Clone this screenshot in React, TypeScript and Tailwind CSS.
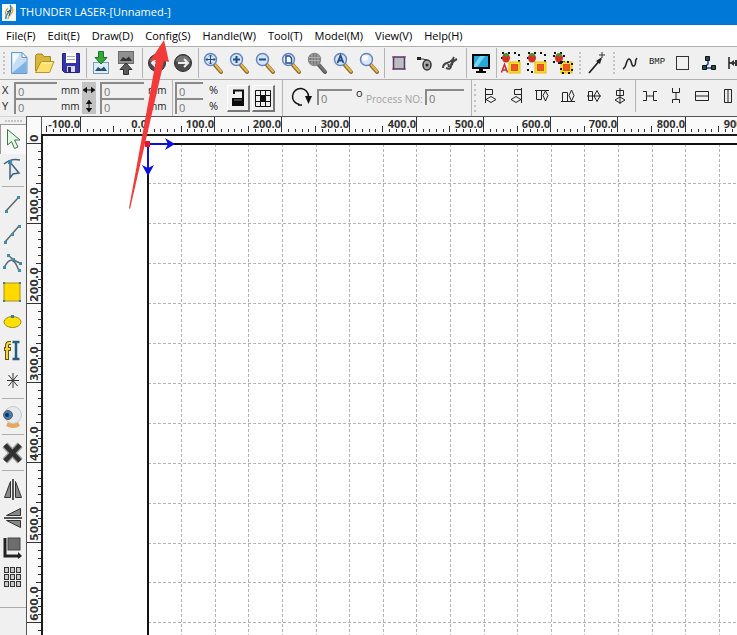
import type { ReactNode } from 'react'

const MENUS = ['File(F)', 'Edit(E)', 'Draw(D)', 'Config(S)', 'Handle(W)', 'Tool(T)', 'Model(M)', 'View(V)', 'Help(H)']

// canvas scale: pixels per 100 units on each axis
const STEP_X = 67.2
const STEP_Y = 79.8
const ORIGIN_X = 105
const ORIGIN_Y = 8

// how many hundreds fit in the window
const COLS = Math.ceil((window.innerWidth - 148) / STEP_X)
const ROWS = Math.floor((window.innerHeight - 144) / STEP_Y)

const range = (from: number, to: number) => Array.from({ length: to - from + 1 }, (_, i) => from + i)

export default function App() {
  return (
    <div className="relative h-screen flex flex-col overflow-hidden bg-[#f0f0f0] text-[#222] font-['Open_Sans','Noto_Sans',sans-serif]">
      <TitleBar />
      <MenuBar />
      <MainToolbar />
      <PropertyBar />
      <div className="flex flex-1 min-h-0">
        <SideTools />
        <Workspace />
      </div>
      <Pointer />
    </div>
  )
}

function TitleBar() {
  return (
    <header className="flex items-center h-[25px] shrink-0 gap-1 pl-0.5 bg-[#0078d7]">
      <svg width="14" height="17" viewBox="0 0 14 17">
        <rect width="14" height="17" fill="#f4f8fa" />
        <path d="M8 1C10 4 9 6 7 8S3 12 4 15" fill="none" stroke="#2f86b8" strokeWidth="1.5" />
        <path d="M10 3C12 7 10 9 8 11S6 14 6 15M6 4C3 7 3 9 4 11" fill="none" stroke="#d2a637" strokeWidth="1.2" />
        <path d="M5 8L9 6L7 12" fill="none" stroke="#26485e" />
      </svg>
      <h1 className="text-[11px] text-white whitespace-nowrap">THUNDER LASER-[Unnamed-]</h1>
    </header>
  )
}

function MenuBar() {
  return (
    <nav className="flex items-center h-[21px] pt-0.5 shrink-0 bg-white">
      {MENUS.map(m => (
        <button key={m} className="px-1.5 text-[11px] whitespace-nowrap text-black">{m}</button>
      ))}
    </nav>
  )
}

function ToolButton({ label, children }: { label: string; children: ReactNode }) {
  return (
    <button aria-label={label} title={label} className="w-[26px] h-full shrink-0 flex items-center justify-center">
      <svg width="24" height="24" viewBox="0 0 24 24" fill="none">{children}</svg>
    </button>
  )
}

function Sep() {
  return <div className="w-px mx-0.5 mr-px self-stretch shrink-0 bg-[#b4b4b4]" />
}

function Grip() {
  return (
    <div className="w-2 py-1 self-stretch shrink-0 flex flex-col items-center justify-between">
      {range(0, 5).map(i => <span key={i} className="size-0.5 bg-[#c4c4c4]" />)}
    </div>
  )
}

function Lens({ grey, children }: { grey?: boolean; children?: ReactNode }) {
  return (
    <>
      <path d="M13.5 13.5L20 21" stroke={grey ? '#555' : '#8b6a35'} strokeWidth="4" strokeLinecap="round" />
      <path d="M14.5 14L20 20.5" stroke={grey ? '#777' : '#eab84a'} strokeWidth="2" strokeLinecap="round" />
      <circle cx="9.5" cy="8.5" r="6" fill={grey ? '#777' : '#d6e6fa'} stroke={grey ? '#888' : '#6585bd'} strokeWidth="1.5" />
      {children}
    </>
  )
}

function Handles({ x, y, w, h }: { x: number; y: number; w: number; h: number }) {
  return <rect x={x} y={y} width={w} height={h} stroke="#111" strokeWidth="2" strokeDasharray="2 4" />
}

function Group({ variant }: { variant: 'text' | 'plain' | 'offset' }) {
  const dx = variant === 'offset' ? 1 : 0
  return (
    <>
      {variant === 'offset'
        ? <Handles x={3} y={2} w={10} h={10} />
        : <Handles x={3} y={2} w={17} h={19} />}
      <ellipse cx={7 + dx} cy="7" rx="4" ry="4.5" fill="#d4301f" />
      <path d={`M${4 + dx} 4Q${7 + dx} 0 ${10 + dx} 4L${8 + dx} 6Z`} fill="#3c9a35" />
      <rect x="10" y="11" width="11" height="11" fill="#ffe11d" stroke="#e3bb13" />
      <rect x="12.5" y="13.5" width="6" height="6" fill="#f4532c" stroke="#d9541c" />
      {variant === 'offset' && <Handles x={10} y={11} w={11} h={11} />}
      {variant === 'text' && (
        <>
          <rect x="1" y="12" width="8" height="11" fill="#f0f0f0" />
          <path d="M2.5 21.5L5.5 13.5L8.5 21.5M4 19H7" stroke="#cf2930" strokeWidth="1.5" />
        </>
      )}
    </>
  )
}

function RoundArrow({ flip }: { flip?: boolean }) {
  return (
    <>
      <circle cx="12" cy="12" r="8.5" fill="#4c4c4c" stroke="#2f2f2f" />
      <path d="M4.5 10A8 8 0 0 1 19.5 10Q12 13 4.5 10Z" fill="#777" />
      <path d={flip ? 'M17 12H7M11 8L7 12L11 16' : 'M7 12H17M13 8L17 12L13 16'} stroke="#eee" strokeWidth="2" />
    </>
  )
}

function MainToolbar() {
  return (
    <div role="toolbar" aria-label="Main" className="flex items-center h-[34px] py-px shrink-0 overflow-hidden border-y border-[#b0b0b0]">
      <div className="-mr-0.5 self-stretch flex"><Grip /></div>
      <ToolButton label="New">
        <path d="M4.5 1.5H15L20 6.5V22.5H4.5Z" fill="#c5def6" stroke="#6d9bc9" />
        <path d="M5 22L19.5 10V22Z" fill="#7eb2e4" />
        <path d="M5.5 2.5H13L6 14Z" fill="#f2f9ff" />
        <path d="M15 1.5V6.5H20Z" fill="#fff" stroke="#6d9bc9" />
      </ToolButton>
      <ToolButton label="Open">
        <path d="M2.5 20V4.5L4 3H9L11 5.5H17.5V10" fill="#d9b73a" stroke="#a98722" />
        <path d="M2.5 21.5L8 10.5H21L16.5 21.5Z" fill="#fbe06c" stroke="#b8932a" />
        <path d="M9 12H19" stroke="#fff4b6" />
      </ToolButton>
      <ToolButton label="Save">
        <path d="M3.5 2.5H20.5V21.5H5.5L3.5 19.5Z" fill="#3433a8" stroke="#242383" />
        <rect x="7" y="2" width="10" height="10" fill="#fff" />
        <path d="M8 5.5H16M8 8.5H16" stroke="#aaa" />
        <rect x="8" y="15" width="8" height="6" fill="#d8d8e8" />
        <rect x="9" y="16" width="3" height="5" fill="#28276f" />
      </ToolButton>
      <Sep />
      <ToolButton label="Import">
        <rect x="4.5" y="11.5" width="15" height="11" fill="#dceefb" stroke="#7a9db5" />
        <path d="M6 20L9 16L12 18L15 15.5L18 20Z" fill="#28506b" />
        <path d="M9.5 0.5H14.5V6.5H18L12 13L6 6.5H9.5Z" fill="#35a83a" stroke="#1d7426" />
      </ToolButton>
      <ToolButton label="Export">
        <rect x="3.5" y="0.5" width="15" height="12" fill="#909090" stroke="#6c6c6c" />
        <path d="M5 10L8 6L11 8L14 5.5L17 10Z" fill="#333" />
        <path d="M8.5 23.5H13.5V18.5H17L11 12L5 18.5H8.5Z" fill="#5b5b5b" stroke="#333" />
      </ToolButton>
      <Sep />
      <ToolButton label="Undo"><RoundArrow flip /></ToolButton>
      <ToolButton label="Redo"><RoundArrow /></ToolButton>
      <Sep />
      <ToolButton label="Pan">
        <Lens>
          <path d="M5 8.5H14M9.5 4V13M8 5.5L9.5 4L11 5.5M8 11.5L9.5 13L11 11.5M6.5 7L5 8.5L6.5 10M12.5 7L14 8.5L12.5 10" stroke="#234c8e" />
        </Lens>
      </ToolButton>
      <ToolButton label="Zoom in"><Lens><path d="M6 8.5H13M9.5 5V12" stroke="#234c8e" strokeWidth="2" /></Lens></ToolButton>
      <ToolButton label="Zoom out"><Lens><path d="M6 8.5H13" stroke="#234c8e" strokeWidth="2" /></Lens></ToolButton>
      <ToolButton label="Zoom page"><Lens><path d="M7 5H10.5L12.5 7V12H7Z" fill="#fff" stroke="#234c8e" strokeWidth="1.4" /></Lens></ToolButton>
      <ToolButton label="Zoom data">
        <Lens grey><path d="M4 6.5H15M4 9.5H15M7 3.5V14M10 3V14M13 4V13" stroke="#bbb" strokeWidth="0.8" /></Lens>
      </ToolButton>
      <ToolButton label="Zoom all"><Lens><path d="M6.5 12L9.5 4.5L12.5 12M7.5 9.5H11.5" stroke="#234c8e" strokeWidth="1.8" /></Lens></ToolButton>
      <ToolButton label="Zoom select"><Lens><circle cx="8" cy="7" r="3" fill="#fff" /></Lens></ToolButton>
      <Sep />
      <ToolButton label="Frame">
        <rect x="6.5" y="6" width="11" height="12" fill="#bdbdbd" stroke="#4b3a78" strokeWidth="1.5" />
        <path d="M5 6H8M16 6H19M5 18H8M16 18H19" stroke="#b3343c" />
      </ToolButton>
      <ToolButton label="Path start">
        <path d="M4 8H10L14 9" stroke="#333" />
        <rect x="4" y="6" width="4" height="3" fill="#222" />
        <ellipse cx="14" cy="14" rx="4" ry="5" fill="#aaa" stroke="#333" strokeWidth="1.5" />
        <circle cx="14" cy="14" r="1.5" fill="#222" />
      </ToolButton>
      <ToolButton label="Smooth">
        <path d="M4 17Q4 13 8 12T14 8L15 6M7 17Q12 19 12 15T18 8M9 11L10 16M14 8L13 14" stroke="#444" strokeWidth="2" />
      </ToolButton>
      <Sep />
      <ToolButton label="Preview">
        <rect x="3" y="3" width="18" height="15" fill="#080808" />
        <rect x="5" y="5" width="14" height="11" fill="#27a9dc" />
        <path d="M11 5H16L8 16H5V14Z" fill="#75d3f2" />
        <path d="M10 18H14V20H17V22H7V20H10Z" fill="#080808" />
      </ToolButton>
      <Sep />
      <ToolButton label="Select by text"><Group variant="text" /></ToolButton>
      <ToolButton label="Group"><Group variant="plain" /></ToolButton>
      <ToolButton label="Ungroup"><Group variant="offset" /></ToolButton>
      <Grip />
      <ToolButton label="Laser position">
        <path d="M4 22L16 8" stroke="#222" strokeWidth="1.8" />
        <path d="M11 10L17 6L15 13Z" fill="#222" />
        <path d="M14 4H20M17 1V7" stroke="#333" />
      </ToolButton>
      <Grip />
      <ToolButton label="Curve"><path d="M4 18C8 16 7 8 10 8S12 16 15 15S15 10 18 7" stroke="#222" strokeWidth="1.5" /></ToolButton>
      <button className="w-[26px] h-full shrink-0 text-center text-[9px] text-[#222] font-['Liberation_Mono',monospace]">BMP</button>
      <ToolButton label="Rectangle"><rect x="5.5" y="5.5" width="12" height="13" stroke="#333" /></ToolButton>
      <ToolButton label="Node tree">
        <path d="M11 7V13L7 17H17" stroke="#2234c2" strokeWidth="1.5" />
        <path d="M8.5 5.5H12.5V9.5H8.5ZM5.5 14.5H9.5V18.5H5.5ZM14.5 14.5H18.5V18.5H14.5Z" fill="#1c5147" stroke="#111" />
      </ToolButton>
      <ToolButton label="Offset">
        <path d="M6 6V18M6 12H20" stroke="#222" strokeWidth="1.5" />
        <path d="M7 12L11 9V15ZM12 9H18V15H12Z" fill="#333" />
      </ToolButton>
    </div>
  )
}

function Field({ label, width }: { label: string; width: string }) {
  return (
    <input
      aria-label={label}
      defaultValue="0"
      className={`${width} h-4 shrink-0 px-0.5 text-[11px] leading-3 text-[#777] bg-[#f0f0f0] border-t-2 border-l-2 border-[#8a8a8a] outline-none`}
    />
  )
}

function Unit({ children }: { children: ReactNode }) {
  return <span className="w-[22px] pl-1 text-[10px]">{children}</span>
}

function AxisToggle({ label, d }: { label: string; d: string }) {
  return (
    <button aria-label={label} className="w-3.5 h-4 flex items-center justify-center bg-[#c2c2c2]">
      <svg width="14" height="14" viewBox="0 0 14 14"><path d={d} fill="#111" stroke="#111" /></svg>
    </button>
  )
}

function Raised({ label, children }: { label: string; children: ReactNode }) {
  return (
    <button aria-label={label} className="w-[23px] h-[27px] shrink-0 flex items-center justify-center border-t border-l border-t-white border-l-white border-r-2 border-b-2 border-r-[#777] border-b-[#777]">
      <svg width="18" height="22" viewBox="0 0 18 22" fill="none" className="shrink-0">{children}</svg>
    </button>
  )
}

// alignment and distribution glyphs share one outline style
const ALIGN = [
  ['Align left', 'M7.5 4V19M7.5 5.5H14.5V10.5H7.5M8 15.5L13 12.5L18 15.5L13 18.5Z'],
  ['Align right', 'M17.5 4V19M17.5 5.5H10.5V10.5H17.5M7 15.5L12 12.5L17 15.5L12 18.5Z'],
  ['Align top', 'M5 6.5H19M6.5 6.5V15.5H11.5V6.5M15.5 7L18 11.5L15.5 17L13 11.5Z'],
  ['Align bottom', 'M5 17.5H19M6.5 17.5V8.5H11.5V17.5M15.5 6L18 11.5L15.5 17L13 11.5Z'],
  ['Align middle', 'M5 12H19M6.5 7.5H10.5V16.5H6.5ZM15 6.5L18 12L15 17.5L12 12Z'],
  ['Align centre', 'M12 4V20M8.5 6.5H15.5V11.5H8.5ZM12 13L17 16L12 19L7 16Z'],
]
const DISTRIBUTE = [
  ['Space across', 'M5 7.5H8.5V16.5H5M19 7.5H15.5V16.5H19M8.5 12H15.5'],
  ['Space down', 'M8.5 4V8.5H15.5V4M8.5 19V15.5H15.5V19M12 8.5V15.5'],
  ['Same width', 'M5.5 7.5H18.5V16.5H5.5ZM5.5 12H18.5'],
  ['Same height', 'M8.5 5.5H15.5V18.5H8.5ZM12 5.5V18.5'],
]

function PropertyBar() {
  return (
    <div role="toolbar" aria-label="Properties" className="flex items-center h-9 shrink-0 overflow-hidden text-[11px] whitespace-nowrap">
      <div className="flex flex-col pl-0.5">
        <div className="flex items-center h-4">
          <span className="w-3">X</span><Field label="X position" width="w-[43px]" /><Unit>mm</Unit>
        </div>
        <div className="flex items-center h-4">
          <span className="w-3">Y</span><Field label="Y position" width="w-[43px]" /><Unit>mm</Unit>
        </div>
      </div>
      <div className="flex flex-col ml-[3px]">
        <AxisToggle label="Width" d="M1 7H13M4.5 4.5L1.5 7L4.5 9.5ZM9.5 4.5L12.5 7L9.5 9.5Z" />
        <AxisToggle label="Height" d="M7 1V13M4.5 4.5L7 1.5L9.5 4.5ZM4.5 9.5L7 12.5L9.5 9.5Z" />
      </div>
      <div className="flex flex-col ml-1">
        <div className="flex items-center h-4"><Field label="Width" width="w-11" /><Unit>mm</Unit></div>
        <div className="flex items-center h-4"><Field label="Height" width="w-11" /><Unit>mm</Unit></div>
      </div>
      <div className="ml-1.5 w-px self-stretch shrink-0 bg-[#b4b4b4]" />
      <div className="flex flex-col ml-0.5">
        <div className="flex items-center h-4"><Field label="Scale X" width="w-7" /><span className="w-[18px] pl-1.5">%</span></div>
        <div className="flex items-center h-4"><Field label="Scale Y" width="w-7" /><span className="w-[18px] pl-1.5">%</span></div>
      </div>
      <div className="flex gap-0.5 ml-1.5">
        <Raised label="Lock ratio">
          <path d="M5 7V3.5H14V11" stroke="#111" strokeWidth="2" />
          <rect x="3" y="11" width="12" height="8" fill="#0b0b0b" />
          <path d="M5 13H13" stroke="#777" />
        </Raised>
        <Raised label="Anchor point">
          <path d="M1.5 3.5H16.5V19.5H1.5ZM1.5 8.5H16.5M1.5 14.5H16.5M6.5 3.5V19.5M11.5 3.5V19.5" stroke="#111" />
          <rect x="6" y="8" width="6" height="7" fill="#111" />
        </Raised>
      </div>
      <div className="ml-[7px] w-px self-stretch shrink-0 bg-[#b4b4b4]" />
      <div className="flex items-center h-full pb-0.5">
        <button aria-label="Rotate" className="ml-[7px] shrink-0">
          <svg width="24" height="24" viewBox="0 0 24 24" fill="none">
            <path d="M8 20H12M9.5 19.5A8 8 0 1 1 18.5 12" stroke="#111" strokeWidth="1.5" />
            <path d="M15 11H22L18.5 19Z" fill="#111" />
          </svg>
        </button>
        <div className="ml-[3px] flex items-start">
          <Field label="Angle" width="w-[35px]" />
          <span className="w-3 pl-1 leading-[8px]">o</span>
        </div>
        <label className="ml-0.5 flex items-center text-[10px] text-[#a0a0a0]">
          <span className="w-[59px] pt-1">Process NO:</span>
          <Field label="Process number" width="w-[39px]" />
        </label>
      </div>
      <div className="ml-[7px] -mr-px w-px self-stretch shrink-0 bg-[#b4b4b4]" />
      <div className="-mr-0.5 self-stretch flex"><Grip /></div>
      <div className="flex items-center h-full pb-1">
        {ALIGN.map(([name, d]) => (
          <ToolButton key={name} label={name}><path d={d} stroke="#222" /></ToolButton>
        ))}
        <Sep />
        {DISTRIBUTE.map(([name, d]) => (
          <ToolButton key={name} label={name}><path d={d} stroke="#222" /></ToolButton>
        ))}
      </div>
    </div>
  )
}

function SideButton({ label, active, children }: { label: string; active?: boolean; children: ReactNode }) {
  return (
    <button
      aria-label={label}
      className={`w-full flex-1 pr-0.5 flex items-center justify-center ${active ? 'bg-[#f8f8f8] border-t border-l border-[#9a9a9a]' : ''}`}
    >
      <svg width="24" height="24" viewBox="0 0 24 24" fill="none" className="shrink-0">{children}</svg>
    </button>
  )
}

function SideSep() {
  return <div className="h-px my-[3px] ml-0.5 mr-0.5 shrink-0 bg-[#adadad]" />
}

function SideTools() {
  return (
    <div role="toolbar" aria-label="Draw" className="w-[26px] shrink-0 flex flex-col border-t border-[#d5d5d5]">
      <div className="h-[7px] shrink-0 flex items-center justify-around px-1">
        {range(0, 5).map(i => <span key={i} className="size-0.5 bg-[#c4c4c4]" />)}
      </div>
      <div className="flex flex-col h-[59px] shrink-0">
        <SideButton label="Pick" active>
          <path d="M6.5 1.5V17L10.5 13.5L13.5 20.5L17 19L13.5 12H19Z" fill="#e6fae6" stroke="#41764b" />
        </SideButton>
        <SideButton label="Edit nodes">
          <path d="M10 5V21L13 17L19 16Z" fill="#e2ecf4" stroke="#42617d" strokeWidth="1.5" />
          <path d="M4 7Q11 1 20 3" stroke="#42617d" strokeWidth="1.5" />
          <rect x="8" y="3" width="4" height="4" fill="#4286b4" />
        </SideButton>
      </div>
      <SideSep />
      <div className="flex flex-col h-[205px] shrink-0">
        <SideButton label="Line">
          <path d="M6 18L18 5" stroke="#5c6770" strokeWidth="1.5" />
          <path d="M5 17H8V20H5ZM17 3H20V6H17Z" fill="#3c8fae" />
        </SideButton>
        <SideButton label="Polyline">
          <path d="M5 20L19 4" stroke="#5c6770" strokeWidth="1.5" />
          <path d="M4 19H7V22H4ZM18 3H21V6H18ZM11 11H14V14H11Z" fill="#3c8fae" />
        </SideButton>
        <SideButton label="Curve">
          <path d="M4 17Q12 0 19 20M8 4Q14 10 20 12" stroke="#5c6770" strokeWidth="1.5" />
          <path d="M3 15H6V18H3ZM18 18H21V21H18ZM7 3H10V6H7ZM19 11H22V14H19ZM12 7H15V10H12Z" fill="#3c8fae" />
        </SideButton>
        <SideButton label="Rectangle">
          <rect x="4" y="3" width="16" height="18" fill="#ffd900" stroke="#a98f18" />
          <path d="M3 2H5V4H3ZM19 2H21V4H19ZM3 20H5V22H3ZM19 20H21V22H19Z" fill="#367d9e" />
        </SideButton>
        <SideButton label="Ellipse">
          <ellipse cx="12.5" cy="12" rx="8.5" ry="5.5" fill="#ffe000" stroke="#9a8b23" />
          <rect x="11" y="5" width="3" height="3" fill="#367d9e" />
        </SideButton>
        <SideButton label="Text">
          <path d="M11 4H9Q7 4 7 7V21M4 10H11" stroke="#5f5516" strokeWidth="4" />
          <path d="M11 4H9Q7 4 7 7V20M5 10H10" stroke="#f5d43a" strokeWidth="2" />
          <path d="M16 3V20M12.5 3H19.5M12.5 20H19.5" stroke="#255e80" strokeWidth="2.5" />
        </SideButton>
        <SideButton label="Point"><path d="M13 5V20M7 12.5H19M8.5 7L17.5 18M17.5 7L8.5 18" stroke="#333" /></SideButton>
      </div>
      <SideSep />
      <div className="flex flex-col h-[29px] shrink-0">
        <SideButton label="Camera">
          <path d="M8 17H18L20 21Q13 25 6 21Z" fill="#e9a75a" />
          <circle cx="13" cy="10" r="8.5" fill="#e6eaee" stroke="#c3cace" />
          <circle cx="8" cy="10" r="4.5" fill="#2f82c7" stroke="#87552e" />
          <circle cx="7" cy="10" r="2" fill="#0d3459" />
        </SideButton>
      </div>
      <SideSep />
      <div className="flex flex-col h-[29px] shrink-0">
        <SideButton label="Delete">
          <path d="M5 4L20 20M20 4L5 20" stroke="#9a9a9a" strokeWidth="7" />
          <path d="M5 4L20 20M20 4L5 20" stroke="#303030" strokeWidth="4.5" />
        </SideButton>
      </div>
      <SideSep />
      <div className="flex flex-col h-[118px] shrink-0">
        <SideButton label="Mirror horizontally">
          <path d="M10.5 4.5V20.5H4.5ZM15.5 4.5V20.5H21.5Z" fill="#888" stroke="#333" />
          <path d="M13 2V23" stroke="#222" strokeWidth="1.5" />
        </SideButton>
        <SideButton label="Mirror vertically">
          <path d="M20.5 9.5V2.5L6.5 9.5ZM20.5 14.5V21.5L6.5 14.5Z" fill="#888" stroke="#333" />
          <path d="M4 12H22" stroke="#222" strokeWidth="1.5" />
        </SideButton>
        <SideButton label="Place to corner">
          <rect x="8" y="2" width="12" height="12" fill="#6d6d6d" stroke="#444" />
          <path d="M5 2V20H20" stroke="#222" strokeWidth="3" />
          <path d="M18 16L22 20L18 23Z" fill="#222" />
        </SideButton>
        <SideButton label="Array">
          {[5, 11, 17].flatMap(x => [3, 10, 17].map(y => (
            <rect key={`${x}-${y}`} x={x - 0.5} y={y - 0.5} width="4" height="5" fill="#ccc" stroke="#333" />
          )))}
        </SideButton>
      </div>
      <div className="h-px mt-[15px] shrink-0 bg-[#adadad]" />
    </div>
  )
}

function HorizontalRuler() {
  return (
    <svg className="flex-1 min-w-0 h-[17px] bg-[#fafafa]" shapeRendering="crispEdges">
      {range(-15, COLS * 10).map(i => {
        const x = Math.round(ORIGIN_X + (i * STEP_X) / 10)
        const top = i % 10 === 0 ? 0 : i % 5 === 0 ? 9 : 12
        return <path key={i} d={`M${x + 0.5} ${top}V15`} stroke="#333" />
      })}
      {range(-1, COLS).map(i => (
        <text key={i} x={Math.round(ORIGIN_X + i * STEP_X)} y="11" textAnchor="end" className="text-[11px] font-bold fill-[#333]">
          {(i * 100).toFixed(1)}
        </text>
      ))}
    </svg>
  )
}

function VerticalRuler() {
  return (
    <svg className="w-[15px] shrink-0 h-full bg-[#fafafa] border-l border-[#555]" shapeRendering="crispEdges">
      {range(0, ROWS * 10 + 9).map(i => {
        const y = Math.round(ORIGIN_Y + 2 + (i * STEP_Y) / 10)
        const left = i % 10 === 0 ? 0 : i % 5 === 0 ? 9 : 11
        return <path key={i} d={`M${left} ${y - 0.5}H14`} stroke="#333" />
      })}
      {range(0, ROWS).map(i => (
        <text
          key={i}
          transform={`translate(11 ${Math.round(ORIGIN_Y + i * STEP_Y)}) rotate(-90)`}
          className="text-[11px] font-bold fill-[#333] font-['DejaVu_Sans',sans-serif]"
        >
          {i === 0 ? '0' : (i * 100).toFixed(1)}
        </text>
      ))}
    </svg>
  )
}

function Workspace() {
  return (
    <div className="flex-1 min-w-0 flex flex-col border-t border-[#555]">
      <div className="flex shrink-0">
        <div className="w-4 h-[17px] border-x border-[#555] bg-[#fafafa]" />
        <HorizontalRuler />
      </div>
      <div className="flex flex-1 min-h-0">
        <VerticalRuler />
        <div className="flex-1 min-w-0 bg-white border-t-2 border-l-2 border-[#1c1c1c]">
          <Canvas />
        </div>
      </div>
    </div>
  )
}

function Canvas() {
  return (
    <svg className="w-full h-full" aria-label="Work area">
      <g stroke="#b5b5b5" strokeDasharray="3 2" shapeRendering="crispEdges">
        {range(1, COLS * 2).map(i => {
          const x = Math.floor(ORIGIN_X + (i * STEP_X) / 2) + 0.5
          return <line key={i} x1={x} y1={ORIGIN_Y} x2={x} y2="3000" />
        })}
        {range(1, ROWS * 2 + 1).map(i => {
          const y = Math.floor(ORIGIN_Y + (i * STEP_Y) / 2) + 0.5
          return <line key={i} x1={ORIGIN_X} y1={y} x2="4000" y2={y} />
        })}
      </g>
      <path d={`M4000 ${ORIGIN_Y}H${ORIGIN_X}V3000`} fill="none" stroke="#111" strokeWidth="2" />
      <path d={`M${ORIGIN_X} ${ORIGIN_Y}H128M${ORIGIN_X} ${ORIGIN_Y}V36`} stroke="#0b10e0" strokeWidth="2" />
      <path d="M122 2L132 8L122 14L125 8ZM99 29L105 40L111 29L105 32Z" fill="#0b10e0" />
      <rect x={ORIGIN_X - 3} y={ORIGIN_Y - 3} width="5" height="6" fill="#e0152b" />
    </svg>
  )
}

// red callout pointing at the Config menu
function Pointer() {
  return (
    <svg className="absolute left-[126px] top-[38px] pointer-events-none" width="46" height="174" viewBox="126 38 46 174">
      <path d="M164 40L169 62L164 61L130 209L129 208L156 60L150 61Z" fill="#f23a3a" />
    </svg>
  )
}
